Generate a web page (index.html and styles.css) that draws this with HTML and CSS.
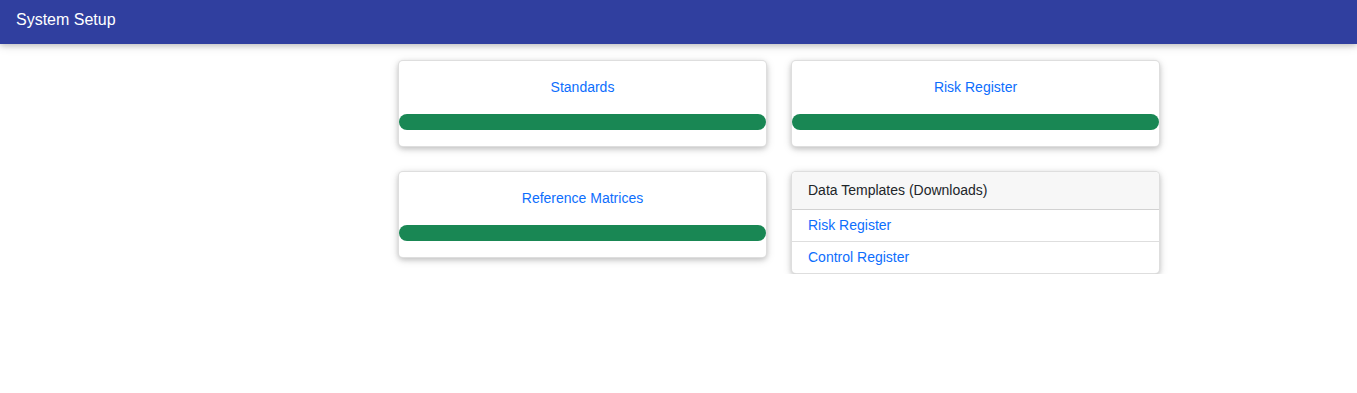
FILE: index.html
```html
<!DOCTYPE html>
<html>
<head>
<meta charset="utf-8">
<link rel="stylesheet" href="styles.css">
</head>
<body>
<header class="topbar">System Setup</header>
<main class="content">
  <div class="grid">
    <div class="card tile">
      <a class="tile-link" href="#">Standards</a>
      <div class="bar"></div>
    </div>
    <div class="card tile">
      <a class="tile-link" href="#">Risk Register</a>
      <div class="bar"></div>
    </div>
    <div class="card tile">
      <a class="tile-link" href="#">Reference Matrices</a>
      <div class="bar"></div>
    </div>
    <div class="card list-card">
      <div class="card-header">Data Templates (Downloads)</div>
      <a class="list-item" href="#">Risk Register</a>
      <a class="list-item" href="#">Control Register</a>
    </div>
  </div>
</main>
</body>
</html>
```
FILE: styles.css
```css
* { box-sizing: border-box; }
html, body { margin: 0; padding: 0; background: #fff; }
body {
  font-family: "Liberation Sans", Arial, sans-serif;
  font-size: 14px;
  line-height: 21px;
  color: #212529;
}
.topbar {
  height: 44px;
  background: #303f9f;
  color: #fff;
  font-size: 16px;
  line-height: 20px;
  padding: 10px 16px 14px;
  box-shadow: 0 2px 5px 0 rgba(0,0,0,.16), 0 2px 10px 0 rgba(0,0,0,.12);
  position: relative;
}
.content {
  padding: 16px 0 0 398px;
}
.grid {
  display: grid;
  grid-template-columns: 369px 369px;
  column-gap: 24px;
  row-gap: 24px;
  align-items: start;
}
.card {
  background: #fff;
  border: 1px solid rgba(0,0,0,.13);
  border-radius: 5px;
  box-shadow: 0 2px 5px 0 rgba(0,0,0,.16), 0 2px 10px 0 rgba(0,0,0,.12);
  overflow: hidden;
}
.tile {
  padding: 16px 0;
  display: flex;
  flex-direction: column;
  align-items: center;
}
.tile-link {
  color: #0d6efd;
  text-decoration: none;
  line-height: 21px;
}
.bar {
  align-self: stretch;
  height: 16px;
  margin-top: 16px;
  background: #198754;
  border-radius: 8px;
}
.card-header {
  background: #f7f7f7;
  padding: 8px 16px;
  border-bottom: 1px solid rgba(0,0,0,.15);
  line-height: 21px;
}
.list-item {
  display: block;
  padding: 5px 16px 5px;
  color: #0d6efd;
  text-decoration: none;
  line-height: 21px;
}
.list-item + .list-item {
  border-top: 1px solid rgba(0,0,0,.13);
}
```
